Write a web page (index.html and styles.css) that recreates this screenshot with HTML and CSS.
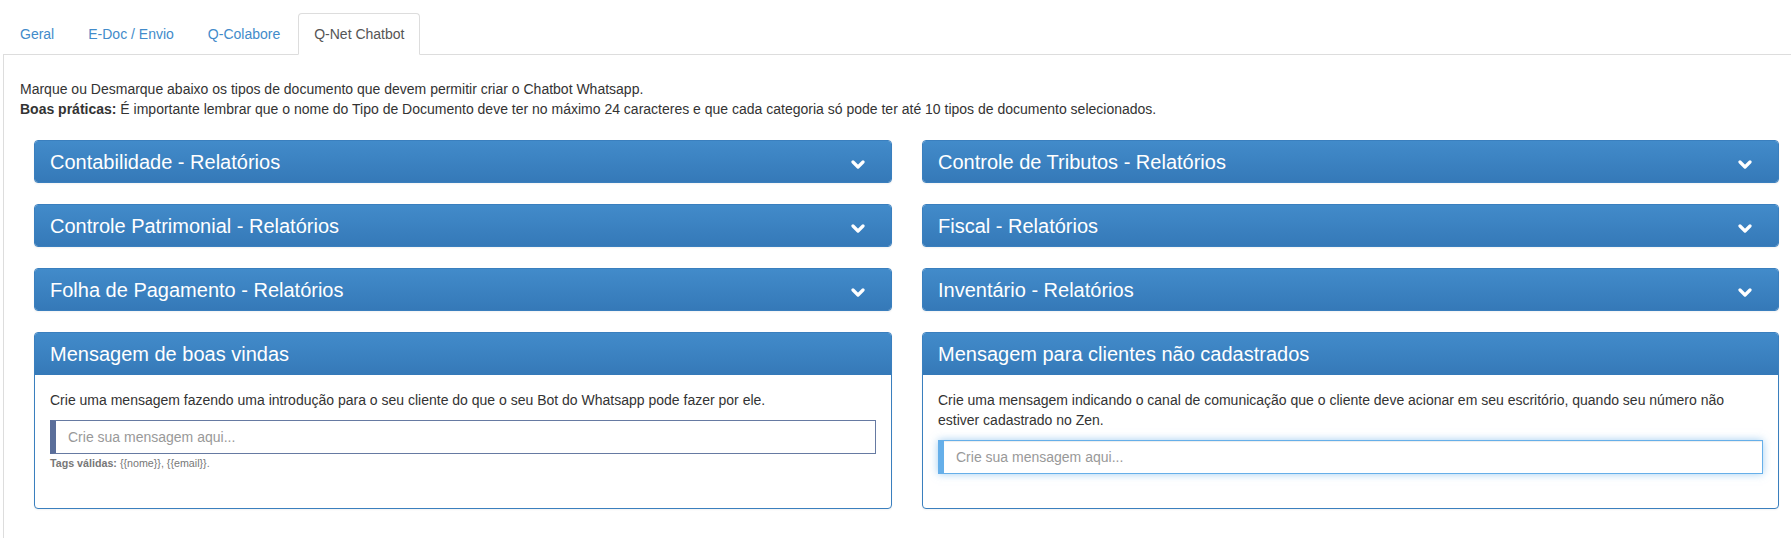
FILE: index.html
```html
<!DOCTYPE html>
<html lang="pt-BR">

<head>
    <meta charset="UTF-8">
    <meta name="viewport" content="width=device-width, initial-scale=1.0">
    <title>Q-Net Chatbot</title>
    <link rel="stylesheet" href="styles.css">
</head>

<body>
    <div class="page">
        <ul class="nav-tabs">
            <li><a href="#">Geral</a></li>
            <li><a href="#">E-Doc / Envio</a></li>
            <li><a href="#">Q-Colabore</a></li>
            <li class="active"><a href="#">Q-Net Chatbot</a></li>
        </ul>

        <div class="tab-content">
            <p class="intro">
                Marque ou Desmarque abaixo os tipos de documento que devem permitir criar o Chatbot Whatsapp.<br>
                <b>Boas práticas:</b> É importante lembrar que o nome do Tipo de Documento deve ter no máximo 24 caracteres e que cada categoria só pode ter até 10 tipos de documento selecionados.
            </p>

            <div class="grid">
                <div class="panel">
                    <div class="panel-heading">
                        <h3>Contabilidade - Relatórios</h3>
                        <svg class="chevron" viewBox="0 0 14 10"><polyline points="2,2 7,7 12,2"/></svg>
                    </div>
                </div>
                <div class="panel">
                    <div class="panel-heading">
                        <h3>Controle de Tributos - Relatórios</h3>
                        <svg class="chevron" viewBox="0 0 14 10"><polyline points="2,2 7,7 12,2"/></svg>
                    </div>
                </div>
                <div class="panel">
                    <div class="panel-heading">
                        <h3>Controle Patrimonial - Relatórios</h3>
                        <svg class="chevron" viewBox="0 0 14 10"><polyline points="2,2 7,7 12,2"/></svg>
                    </div>
                </div>
                <div class="panel">
                    <div class="panel-heading">
                        <h3>Fiscal - Relatórios</h3>
                        <svg class="chevron" viewBox="0 0 14 10"><polyline points="2,2 7,7 12,2"/></svg>
                    </div>
                </div>
                <div class="panel">
                    <div class="panel-heading">
                        <h3>Folha de Pagamento - Relatórios</h3>
                        <svg class="chevron" viewBox="0 0 14 10"><polyline points="2,2 7,7 12,2"/></svg>
                    </div>
                </div>
                <div class="panel">
                    <div class="panel-heading">
                        <h3>Inventário - Relatórios</h3>
                        <svg class="chevron" viewBox="0 0 14 10"><polyline points="2,2 7,7 12,2"/></svg>
                    </div>
                </div>

                <div class="panel msg">
                    <div class="panel-heading">
                        <h3>Mensagem de boas vindas</h3>
                    </div>
                    <div class="panel-body">
                        <p>Crie uma mensagem fazendo uma introdução para o seu cliente do que o seu Bot do Whatsapp pode fazer por ele.</p>
                        <input class="msg-input" type="text" placeholder="Crie sua mensagem aqui...">
                        <div class="tags"><b>Tags válidas:</b> {{nome}}, {{email}}.</div>
                    </div>
                </div>
                <div class="panel msg">
                    <div class="panel-heading">
                        <h3>Mensagem para clientes não cadastrados</h3>
                    </div>
                    <div class="panel-body">
                        <p>Crie uma mensagem indicando o canal de comunicação que o cliente deve acionar em seu escritório, quando seu número não estiver cadastrado no Zen.</p>
                        <input class="msg-input focus" type="text" placeholder="Crie sua mensagem aqui..." autofocus>
                    </div>
                </div>
            </div>
        </div>
    </div>
</body>

</html>
```

FILE: styles.css
```css
body {
    margin: 0;
    font-family: "Liberation Sans", Arial, sans-serif;
    font-size: 14px;
    line-height: 20px;
    color: #333;
    background-color: #fff;
}

.page {
    margin-left: 3px;
}

/* tabs */
.nav-tabs {
    display: flex;
    gap: 2px;
    margin: 0;
    padding: 13px 0 0 1px;
    list-style: none;
    border-bottom: 1px solid #ddd;
}

.nav-tabs li {
    margin-bottom: -1px;
}

.nav-tabs a {
    display: block;
    padding: 10px 15px;
    line-height: 20px;
    color: #428bca;
    text-decoration: none;
    border: 1px solid transparent;
    border-radius: 4px 4px 0 0;
}

.nav-tabs .active a {
    color: #555;
    background-color: #fff;
    border-color: #ddd;
    border-bottom-color: transparent;
}

.tab-content {
    border-left: 1px solid #ddd;
    padding: 24px 12px 40px 16px;
}

.intro {
    margin: 0;
}

/* panels */
.grid {
    display: grid;
    grid-template-columns: 858fr 857fr;
    column-gap: 30px;
    row-gap: 21px;
    margin: 21px 0 0 14px;
}

.panel {
    border: 1px solid #3a7fbe;
    border-radius: 4px;
    background-color: #fff;
    box-shadow: 0 1px 2px rgba(0, 0, 0, .05);
    overflow: hidden;
}

.panel-heading {
    display: flex;
    align-items: center;
    justify-content: space-between;
    height: 41px;
    padding: 0 15px;
    box-sizing: border-box;
    background-image: linear-gradient(#428bca, #3579b8);
    color: #fff;
}

.panel-heading h3 {
    margin: 0;
    font-size: 20px;
    font-weight: normal;
    line-height: 22px;
}

.chevron {
    width: 14px;
    height: 10px;
    margin: 6px 11px 0 0;
    fill: none;
    stroke: #fff;
    stroke-width: 3.2;
    stroke-linecap: round;
    stroke-linejoin: round;
}

.msg .panel-heading {
    height: 42px;
}

.panel-body {
    min-height: 133px;
    box-sizing: border-box;
    padding: 15px;
}

.panel-body p {
    margin: 0 0 10px;
}

.msg-input {
    display: block;
    width: 100%;
    height: 34px;
    box-sizing: border-box;
    padding: 0 12px;
    font-family: inherit;
    font-size: 14px;
    color: #555;
    border: 1px solid #667aa2;
    border-left: 6px solid #5a6e9a;
    border-radius: 0;
    outline: none;
}

.msg-input::placeholder {
    color: #999;
}

.msg-input.focus {
    border-color: #66afe9;
    border-left-color: #66afe9;
    box-shadow: inset 0 1px 1px rgba(0, 0, 0, .075), 0 0 8px rgba(102, 175, 233, .6);
}

.tags {
    margin-top: 1px;
    font-size: 10.7px;
    line-height: 16px;
    color: #777;
}
```
